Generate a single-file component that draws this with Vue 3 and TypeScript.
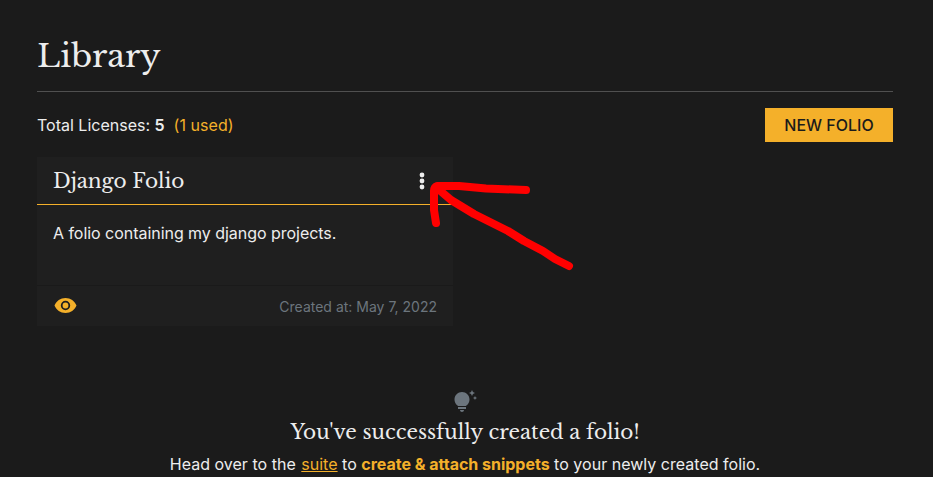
<script setup lang="ts">
interface Folio {
  title: string
  description: string
  created: string
}

const totalLicenses = 5
const folios: Folio[] = [
  {
    title: 'Django Folio',
    description: 'A folio containing my django projects.',
    created: 'May 7, 2022',
  },
]
</script>

<template>
  <main class="page">
    <h1 class="title">Library</h1>
    <div class="toolbar">
      <p class="licenses">
        Total Licenses: <strong>{{ totalLicenses }}</strong>
        <span class="used">({{ folios.length }} used)</span>
      </p>
      <button class="new-folio" type="button">NEW FOLIO</button>
    </div>

    <article v-for="folio in folios" :key="folio.title" class="card">
      <header class="card-head">
        <h2>{{ folio.title }}</h2>
        <svg class="dots" viewBox="0 0 6 18" aria-hidden="true">
          <circle cx="3" cy="3" r="2.4" />
          <circle cx="3" cy="9" r="2.4" />
          <circle cx="3" cy="15" r="2.4" />
        </svg>
      </header>
      <p class="card-body">{{ folio.description }}</p>
      <footer class="card-foot">
        <svg class="eye" viewBox="1 4.5 22 15" aria-hidden="true">
          <path d="M12 4.500C7 4.500 2.730 7.610 1 12c1.730 4.390 6 7.500 11 7.500s9.270-3.110 11-7.500c-1.730-4.390-6-7.500-11-7.500zM12 16.700a4.700 4.700 0 1 1 0-9.400 4.700 4.700 0 0 1 0 9.400zm0-7.600a2.900 2.900 0 1 0 0 5.800 2.900 2.900 0 0 0 0-5.800z" />
        </svg>
        <span class="created">Created at: {{ folio.created }}</span>
      </footer>
    </article>

    <section class="success">
      <svg class="bulb" viewBox="0 0 24 24" aria-hidden="true">
        <path d="M7 20h4c0 1.1-.9 2-2 2s-2-.9-2-2zm-2-1h8v-2H5v2zm11.500-9.500c0 3.820-2.660 5.860-3.770 6.500H5.270c-1.110-.64-3.770-2.680-3.770-6.500C1.500 5.360 4.860 2 9 2s7.500 3.360 7.500 7.500zm4.870-2.130L20 8l1.370.63L22 10l.63-1.370L24 8l-1.370-.63L22 6l-.63 1.370zM19 6l.94-2.060L22 3l-2.060-.94L19 0l-.94 2.060L16 3l2.060.94L19 6z" />
      </svg>
      <h2>You've successfully created a folio!</h2>
      <p>
        Head over to the <a class="suite">suite</a> to
        <strong>create &amp; attach snippets</strong> to your newly created folio.
      </p>
    </section>

    <svg class="arrow" viewBox="425 175 155 100" aria-hidden="true">
      <path d="M526 190L486 188.500 459 186H437Q434 187 434 191V210L436 223" />
      <path d="M437 188L451 200 474 214 508 231 524 241 543 251 555 259 569 266" />
    </svg>
  </main>
</template>

<style>
body {
  background: #1b1b1b;
  overflow: hidden;
}
</style>

<style scoped>
.page {
  position: relative;
  box-sizing: border-box;
  width: 933px;
  height: 477px;
  padding: 32px 40px 0 37px;
  overflow: hidden;
  background: #1b1b1b;
  color: #ededed;
  font: 16px/24px Inter, sans-serif;
}

h1,
h2,
p {
  margin: 0;
  font-weight: 400;
}

h1,
h2 {
  font-family: "Libre Baskerville", "Liberation Serif", serif;
}

.title {
  height: 59px;
  border-bottom: 1px solid #505050;
  font-size: 32px;
  line-height: 48px;
}

.toolbar {
  display: flex;
  justify-content: space-between;
  align-items: center;
  height: 34px;
  margin-top: 16px;
}

.licenses {
  white-space: nowrap;
}

.licenses strong {
  font-weight: 600;
}

.used {
  margin-left: 4px;
  color: #f4b02a;
  letter-spacing: 0.05px;
}

.new-folio {
  width: 128px;
  height: 34px;
  padding: 0;
  border: 0;
  background: #f4b02a;
  color: #1b1b1b;
  font: 500 16px/34px Inter, sans-serif;
}

.card {
  width: 416px;
  height: 169px;
  margin-top: 15px;
  background: #1f1f1f;
}

.card-head {
  display: flex;
  align-items: center;
  justify-content: space-between;
  box-sizing: border-box;
  height: 48px;
  padding: 0 28px 0 16px;
  border-bottom: 1px solid #f4b02a;
}

.card-head h2 {
  font-size: 20px;
}

.dots {
  width: 6px;
  height: 18px;
  fill: #ededed;
}

.card-body {
  box-sizing: border-box;
  height: 80px;
  padding: 16px;
  letter-spacing: -0.04px;
}

.card-foot {
  display: flex;
  align-items: center;
  justify-content: space-between;
  box-sizing: border-box;
  height: 41px;
  padding: 0 16px;
  border-top: 1px solid #1a1a1a;
  color: #6c757d;
  font-size: 14px;
}

.created {
  padding-top: 2px;
}

.eye {
  width: 23px;
  height: 15px;
  margin: 0 0 1px 1px;
  fill: #f4b02a;
}

.success {
  display: flex;
  flex-direction: column;
  align-items: center;
  margin-top: 64px;
  white-space: nowrap;
}

.bulb {
  width: 24px;
  height: 24px;
  fill: #6c757d;
}

.success h2 {
  margin-top: 4px;
  font-size: 20px;
  line-height: 28px;
}

.success p {
  margin-top: 6px;
  letter-spacing: 0.02px;
}

.success strong {
  color: #f4b02a;
  font-weight: 700;
  letter-spacing: -0.02px;
}

.suite {
  margin-left: 1px;
  color: #f4b02a;
  text-decoration: underline;
}

.licenses .used {
  margin-left: 9px;
}

.arrow {
  position: absolute;
  left: 425px;
  top: 175px;
  width: 155px;
  height: 100px;
  fill: none;
  stroke: #f00;
  stroke-width: 8;
  stroke-linecap: round;
  stroke-linejoin: round;
}
</style>
